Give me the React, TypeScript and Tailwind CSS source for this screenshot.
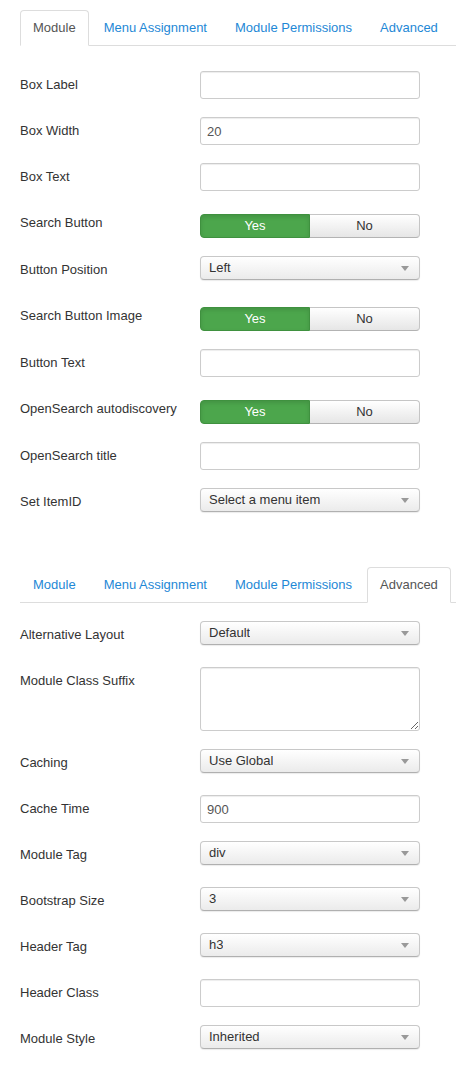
import clsx from "clsx";

type Field =
  | { label: string; kind: "input"; value?: string }
  | { label: string; kind: "select"; value: string }
  | { label: string; kind: "toggle" }
  | { label: string; kind: "textarea" };

const TABS = ["Module", "Menu Assignment", "Module Permissions", "Advanced"];

const moduleFields: Field[] = [
  { label: "Box Label", kind: "input" },
  { label: "Box Width", kind: "input", value: "20" },
  { label: "Box Text", kind: "input" },
  { label: "Search Button", kind: "toggle" },
  { label: "Button Position", kind: "select", value: "Left" },
  { label: "Search Button Image", kind: "toggle" },
  { label: "Button Text", kind: "input" },
  { label: "OpenSearch autodiscovery", kind: "toggle" },
  { label: "OpenSearch title", kind: "input" },
  { label: "Set ItemID", kind: "select", value: "Select a menu item" },
];

const advancedFields: Field[] = [
  { label: "Alternative Layout", kind: "select", value: "Default" },
  { label: "Module Class Suffix", kind: "textarea" },
  { label: "Caching", kind: "select", value: "Use Global" },
  { label: "Cache Time", kind: "input", value: "900" },
  { label: "Module Tag", kind: "select", value: "div" },
  { label: "Bootstrap Size", kind: "select", value: "3" },
  { label: "Header Tag", kind: "select", value: "h3" },
  { label: "Header Class", kind: "input" },
  { label: "Module Style", kind: "select", value: "Inherited" },
];

function Tabs({ active }: { active: string }) {
  return (
    <ul className="flex border-b border-[#ddd]">
      {TABS.map((t) => (
        <li key={t} className="-mb-px mr-[2px] shrink-0">
          <span
            className={clsx(
              "block whitespace-nowrap rounded-t-[4px] border px-[12px] py-[8px] leading-[18px]",
              t === active
                ? "border-[#ddd] border-b-white bg-white text-[#555]"
                : "border-transparent text-[#1e88d6]"
            )}
          >
            {t}
          </span>
        </li>
      ))}
    </ul>
  );
}

function Control({ f }: { f: Field }) {
  if (f.kind === "input") {
    return (
      <input
        readOnly
        value={f.value ?? ""}
        className="block h-[28px] w-[220px] rounded-[3px] border border-[#ccc] bg-white px-[6px] text-[13px] text-[#555] shadow-[inset_0_1px_1px_rgba(0,0,0,0.075)] outline-none"
      />
    );
  }
  if (f.kind === "textarea") {
    return (
      <textarea
        readOnly
        className="block h-[64px] w-[220px] rounded-[3px] border border-[#ccc] bg-white px-[6px] py-[4px] text-[13px] text-[#555] shadow-[inset_0_1px_1px_rgba(0,0,0,0.075)] outline-none"
      />
    );
  }
  if (f.kind === "toggle") {
    return (
      <div className="flex h-[29px] w-[220px] items-start pt-[5px]">
        <span className="flex h-[24px] w-[110px] items-center justify-center rounded-l-[4px] border border-[#3f913f] bg-[#4ca64c] text-white shadow-[inset_0_2px_4px_rgba(0,0,0,0.12)]">
          Yes
        </span>
        <span className="flex h-[24px] w-[110px] items-center justify-center rounded-r-[4px] border border-l-0 border-[#c5c5c5] border-b-[#b3b3b3] bg-gradient-to-b from-white to-[#e6e6e6] text-[#333]">
          No
        </span>
      </div>
    );
  }
  return (
    <div className="h-[28px]">
      <div className="flex h-[24px] w-[220px] items-center justify-between rounded-[4px] border border-[#c8c8c8] border-b-[#b0b0b0] bg-gradient-to-b from-white to-[#ebebeb] pl-[8px] pr-[10px] text-[#333] shadow-[0_1px_1px_rgba(0,0,0,0.08)]">
        <span className="truncate">{f.value}</span>
        <svg width="8" height="5" viewBox="0 0 8 5" className="shrink-0">
          <polygon points="0,0 8,0 4,5" fill="#999" />
        </svg>
      </div>
    </div>
  );
}

function Fields({ fields }: { fields: Field[] }) {
  return (
    <div className="flex flex-col gap-[18px]">
      {fields.map((f) => (
        <div key={f.label} className="flex items-start">
          <label className="w-[180px] shrink-0 pt-[5px] leading-[18px] text-[#333]">{f.label}</label>
          <Control f={f} />
        </div>
      ))}
    </div>
  );
}

export default function App() {
  return (
    <div className="min-h-[1074px] w-[456px] overflow-hidden bg-white pl-[20px] pt-[10px] font-['Liberation_Sans',Arial,sans-serif] text-[13px]">
      <Tabs active="Module" />
      <div className="mt-[25px]">
        <Fields fields={moduleFields} />
      </div>

      <div className="mt-[51px]">
        <Tabs active="Advanced" />
      </div>
      <div className="mt-[18px]">
        <Fields fields={advancedFields} />
      </div>
    </div>
  );
}
